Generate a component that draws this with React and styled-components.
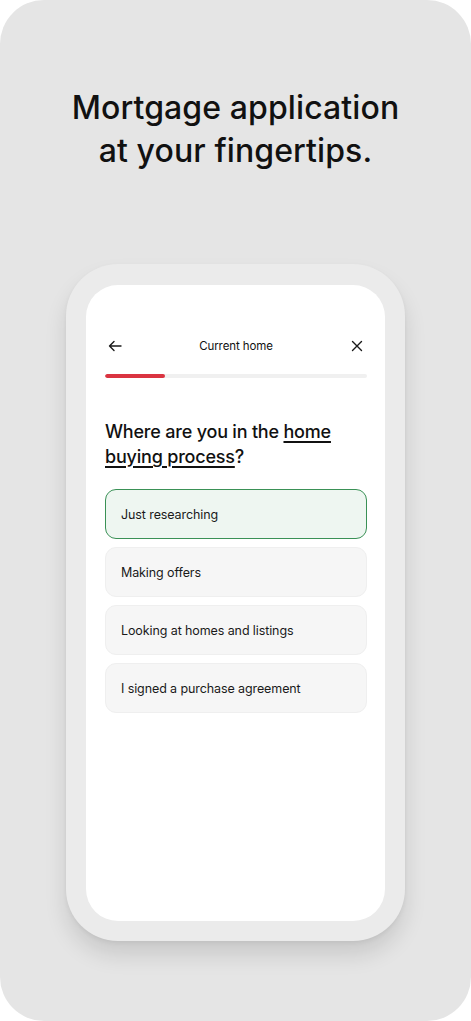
import React from 'react';
import styled, { createGlobalStyle } from 'styled-components';

const GlobalStyle = createGlobalStyle`
  html, body {
    margin: 0;
    padding: 0;
    background: #ffffff;
  }
  * {
    box-sizing: border-box;
  }
`;

const Page = styled.div`
  width: 471px;
  height: 1021px;
  background: #e5e5e5;
  border-radius: 44px;
  display: flex;
  flex-direction: column;
  align-items: center;
  padding-top: 86px;
  font-family: Inter, "Noto Sans", sans-serif;
  color: #111111;
  overflow: hidden;
`;

const Headline = styled.h1`
  margin: 0;
  font-size: 32px;
  line-height: 43px;
  font-weight: 500;
  text-align: center;
  letter-spacing: 0.1px;
`;

const PhoneFrame = styled.div`
  margin-top: 92px;
  width: 339px;
  height: 677px;
  padding: 21px 20px 20px;
  background: #ebebeb;
  border-radius: 52px;
  box-shadow: 0 14px 22px rgba(0, 0, 0, 0.12), 0 2px 4px rgba(0, 0, 0, 0.05);
`;

const Screen = styled.div`
  height: 100%;
  background: #ffffff;
  border-radius: 32px;
  padding: 49px 18px 0 19px;
  display: flex;
  flex-direction: column;
`;

const Header = styled.div`
  display: flex;
  align-items: center;
  justify-content: space-between;
  height: 24px;
`;

const IconButton = styled.button`
  border: none;
  background: none;
  padding: 0;
  width: 20px;
  height: 20px;
  display: flex;
  align-items: center;
  justify-content: center;
  color: #1a1a1a;
`;

const Title = styled.div`
  font-size: 11.5px;
  font-weight: 400;
  letter-spacing: -0.1px;
`;

const Track = styled.div`
  margin-top: 16px;
  height: 4px;
  border-radius: 2px;
  background: #f0f0f0;
  overflow: hidden;
`;

const Fill = styled.div`
  height: 100%;
  background: #da3441;
  border-radius: 2px;
`;

const Question = styled.h2`
  margin: 41px 0 0;
  font-size: 18px;
  line-height: 25px;
  font-weight: 500;
  letter-spacing: -0.2px;
`;

const Link = styled.span`
  text-decoration: underline;
  text-underline-offset: 3px;
  text-decoration-thickness: 1.5px;
`;

const Options = styled.div`
  margin-top: 20px;
  display: flex;
  flex-direction: column;
  gap: 8px;
`;

const Option = styled.div`
  height: 50px;
  display: flex;
  align-items: center;
  padding: 0 15px;
  border-radius: 11px;
  font-size: 12.5px;
  font-weight: 400;
  letter-spacing: -0.1px;
  color: #1a1a1a;
  background: ${p => (p.selected ? '#eef6f1' : '#f6f6f6')};
  border: ${p => (p.selected ? '1.5px solid #3a9156' : '1px solid #efefef')};
`;

const options = [
  'Just researching',
  'Making offers',
  'Looking at homes and listings',
  'I signed a purchase agreement',
];

const App = () => {
  return (
    <>
      <GlobalStyle />
      <Page>
        <Headline>
          Mortgage application
          <br />
          at your fingertips.
        </Headline>
        <PhoneFrame>
          <Screen>
            <Header>
              <IconButton aria-label="Back">
                <svg width="16" height="16" viewBox="0 0 16 16" fill="none" stroke="currentColor" strokeWidth="1.4" strokeLinecap="round" strokeLinejoin="round">
                  <path d="M14 8H2.5M7 3.5L2.5 8L7 12.5" />
                </svg>
              </IconButton>
              <Title>Current home</Title>
              <IconButton aria-label="Close">
                <svg width="14" height="14" viewBox="0 0 14 14" fill="none" stroke="currentColor" strokeWidth="1.4" strokeLinecap="round">
                  <path d="M2.5 2.5L11.5 11.5M11.5 2.5L2.5 11.5" />
                </svg>
              </IconButton>
            </Header>
            <Track>
              <Fill style={{ width: '23%' }} />
            </Track>
            <Question>
              Where are you in the <Link>home</Link>
              <br />
              <Link>buying process</Link>?
            </Question>
            <Options>
              {options.map((label, i) => (
                <Option key={label} selected={i === 0}>
                  {label}
                </Option>
              ))}
            </Options>
          </Screen>
        </PhoneFrame>
      </Page>
    </>
  );
};

export default App;
